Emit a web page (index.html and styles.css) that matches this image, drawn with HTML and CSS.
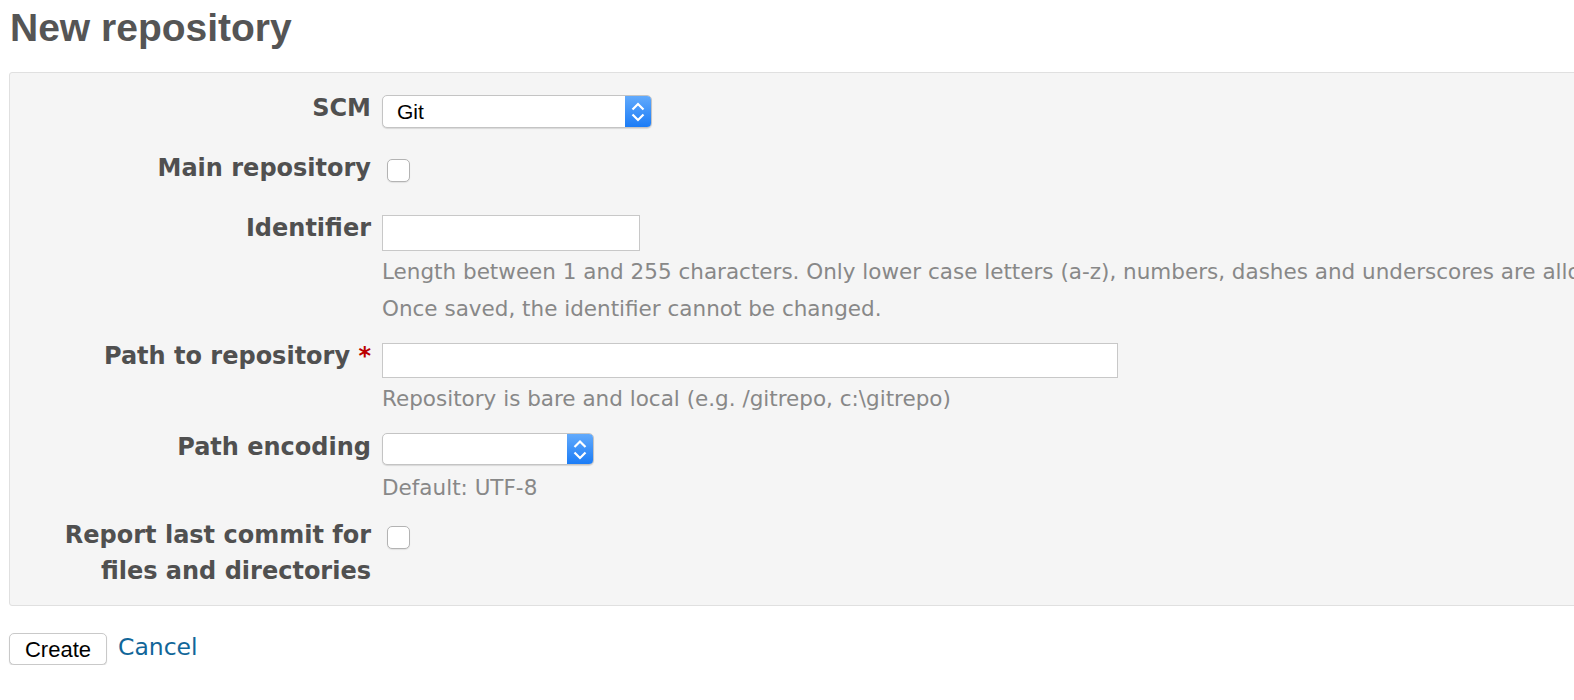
FILE: index.html
```html
<!DOCTYPE html>
<html lang="en">
<head>
<meta charset="utf-8">
<title>New repository</title>
<link rel="stylesheet" href="styles.css">
</head>
<body>
<div class="page">
  <h2 class="title">New repository</h2>
  <form class="repo-form">
    <div class="box">
      <div class="row">
        <label class="label" for="scm">SCM</label>
        <div class="field">
          <span class="select select-scm">
            <select id="scm" class="select-input"><option>Git</option></select>
            <span class="select-arrow"><svg width="26" height="33" viewBox="0 0 26 33"><path d="M7.5 14.5 L13 9 L18.5 14.5" fill="none" stroke="#fff" stroke-width="2.2"/><path d="M7.5 19.5 L13 25 L18.5 19.5" fill="none" stroke="#fff" stroke-width="2.2"/></svg></span>
          </span>
        </div>
      </div>
      <div class="row">
        <label class="label" for="main">Main repository</label>
        <div class="field"><input type="checkbox" id="main" class="check"></div>
      </div>
      <div class="row">
        <label class="label" for="ident">Identifier</label>
        <div class="field">
          <input type="text" id="ident" class="text-input input-ident">
          <em class="info">Length between 1 and 255 characters. Only lower case letters (a-z), numbers, dashes and underscores are allowed.<br>Once saved, the identifier cannot be changed.</em>
        </div>
      </div>
      <div class="row">
        <label class="label" for="path">Path to repository <span class="required">*</span></label>
        <div class="field">
          <input type="text" id="path" class="text-input input-path">
          <em class="info">Repository is bare and local (e.g. /gitrepo, c:\gitrepo)</em>
        </div>
      </div>
      <div class="row">
        <label class="label" for="enc">Path encoding</label>
        <div class="field">
          <span class="select select-enc">
            <select id="enc" class="select-input"><option></option></select>
            <span class="select-arrow"><svg width="26" height="32" viewBox="0 0 26 32"><path d="M7.5 14 L13 8.5 L18.5 14" fill="none" stroke="#fff" stroke-width="2.2"/><path d="M7.5 19.5 L13 25 L18.5 19.5" fill="none" stroke="#fff" stroke-width="2.2"/></svg></span>
          </span>
          <em class="info info-enc">Default: UTF-8</em>
        </div>
      </div>
      <div class="row">
        <label class="label" for="report">Report last commit for<br>files and directories</label>
        <div class="field"><input type="checkbox" id="report" class="check"></div>
      </div>
    </div>
    <div class="actions">
      <button type="button" class="btn">Create</button>
      <a href="#" class="cancel">Cancel</a>
    </div>
  </form>
</div>
</body>
</html>
```

FILE: styles.css
```css
html, body {
  margin: 0;
  padding: 0;
  background: #fff;
  overflow: hidden;
}

body {
  font-family: "DejaVu Sans", Verdana, sans-serif;
  font-size: 24px;
  color: #505050;
}

.page {
  padding: 0 0 0 9px;
}

.title {
  font-family: "Liberation Sans", Arial, sans-serif;
  font-weight: bold;
  font-size: 39px;
  line-height: 48px;
  color: #555;
  margin: 4px 0 20px 1px;
}

.box {
  width: 1700px;
  background: #f5f5f5;
  border: 1px solid #e0e0e0;
  border-radius: 3px;
  padding: 12px 0 10px;
}

.row {
  display: grid;
  grid-template-columns: 361px 1fr;
  column-gap: 11px;
  padding: 6px 0;
  min-height: 48px;
}

.label {
  text-align: right;
  font-weight: bold;
  color: #505050;
  line-height: 35.5px;
}

.required {
  color: #bb0000;
}

.field {
  display: flex;
  flex-direction: column;
  align-items: flex-start;
}

.select {
  display: inline-flex;
  align-items: stretch;
  background: #fff;
  border: 1px solid #c4c4c4;
  border-radius: 5px;
  box-shadow: 0 1px 1px rgba(0, 0, 0, 0.12);
  overflow: hidden;
  box-sizing: border-box;
}

.select-scm {
  width: 270px;
  height: 33px;
  margin-top: 4px;
}

.select-enc {
  width: 212px;
  height: 32px;
  margin-top: 3px;
}

.select-input {
  appearance: none;
  -webkit-appearance: none;
  flex: 1;
  border: 0;
  background: transparent;
  font-family: "Liberation Sans", Arial, sans-serif;
  font-size: 21px;
  color: #000;
  padding: 0 0 0 14px;
  margin: 0;
  outline: none;
}

.select-arrow {
  width: 26px;
  background: linear-gradient(#62aafc, #1b7cf6);
  display: flex;
  align-items: center;
  justify-content: center;
}

.select-arrow svg {
  display: block;
}

.check {
  appearance: none;
  -webkit-appearance: none;
  width: 23px;
  height: 23px;
  margin: 8px 0 0 5px;
  background: #fff;
  border: 1px solid #b3b3b3;
  border-radius: 5px;
  box-shadow: 0 1px 1px rgba(0, 0, 0, 0.08);
  box-sizing: border-box;
}

.text-input {
  box-sizing: border-box;
  border: 1px solid #c8c8c8;
  background: #fff;
  margin: 4px 0 0;
  padding: 0 4px;
  font-family: inherit;
  font-size: 21px;
  outline: none;
}

.input-ident {
  width: 258px;
  height: 36px;
}

.input-path {
  width: 736px;
  height: 35px;
}

.info {
  display: block;
  font-style: normal;
  font-size: 21.5px;
  line-height: 36.5px;
  color: #888;
  margin-top: 3px;
  white-space: nowrap;
}

.info-enc {
  margin-top: 5px;
}

.actions {
  display: flex;
  align-items: center;
  gap: 11px;
  margin-top: 27px;
}

.btn {
  width: 98px;
  height: 32px;
  background: #fff;
  border: 1px solid #c9c9c9;
  border-radius: 5px;
  box-shadow: 0 1px 1px rgba(0, 0, 0, 0.15);
  font-family: "Liberation Sans", Arial, sans-serif;
  font-size: 22px;
  color: #000;
  padding: 2px 0 0;
  margin: 0;
}

.cancel {
  color: #116699;
  text-decoration: none;
  font-size: 23.5px;
  position: relative;
  top: -2px;
}
```
